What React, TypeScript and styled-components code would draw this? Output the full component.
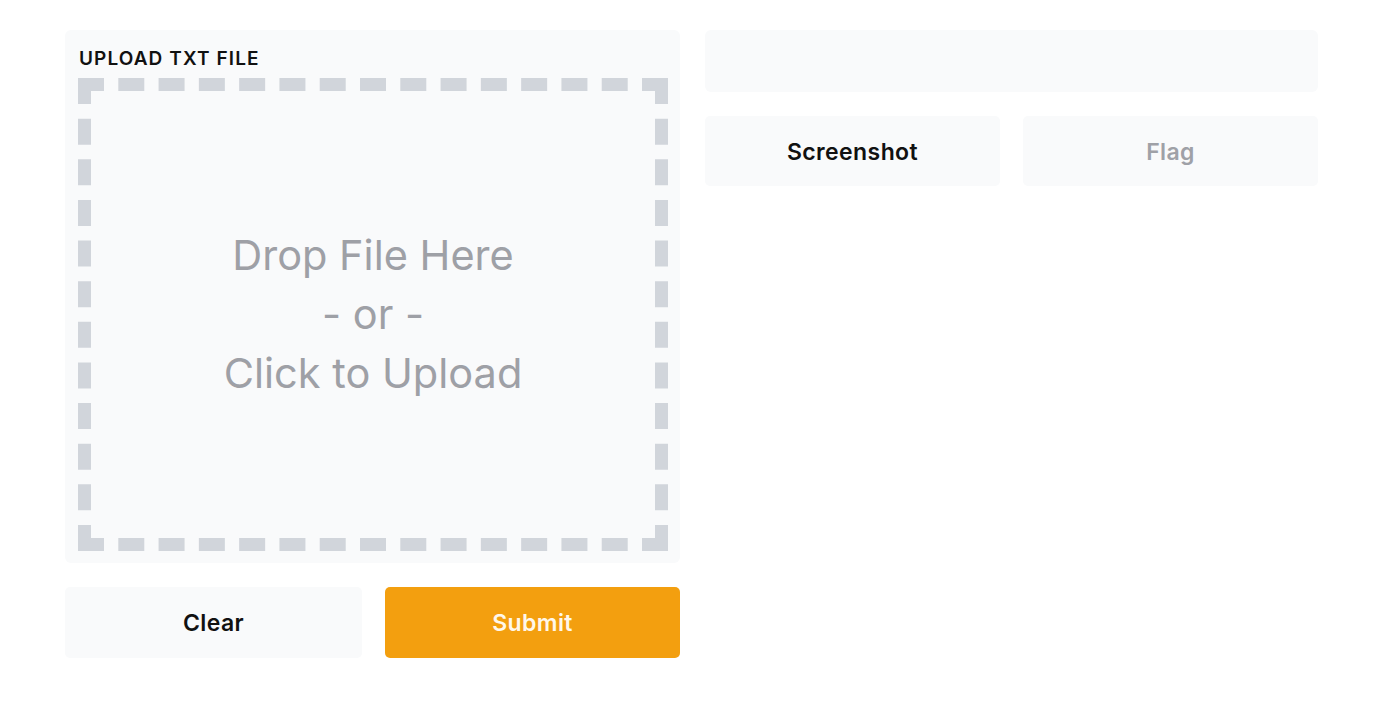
import React from "react";
import styled, { createGlobalStyle } from "styled-components";

const Global = createGlobalStyle`
  html, body { margin: 0; padding: 0; background: #ffffff; }
  body { font-family: "Inter", "Liberation Sans", sans-serif; }
  * { box-sizing: border-box; }
`;

const Page = styled.div`
  display: grid;
  grid-template-columns: 615px 613px;
  column-gap: 25px;
  padding: 30px 0 0 65px;
`;

const Column = styled.div`
  display: flex;
  flex-direction: column;
  gap: 24px;
`;

const Panel = styled.div`
  background: #f9fafb;
  border-radius: 6px;
  padding: 13px 12px 12px 13px;
  display: flex;
  flex-direction: column;
  height: 533px;
`;

const Label = styled.div`
  font-size: 19px;
  font-weight: 600;
  letter-spacing: 1.1px;
  color: #111;
  height: 35px;
  line-height: 31px;
  padding-left: 1px;
`;

const DropZone = styled.div`
  flex: 1;
  border: 13.5px dashed #d1d5db;
  display: flex;
  align-items: center;
  justify-content: center;
  text-align: center;
  color: #9ea0a6;
  font-size: 41.5px;
  line-height: 59px;
  font-weight: 400;
  cursor: pointer;
`;

const ButtonRow = styled.div<{ $cols: string }>`
  display: grid;
  grid-template-columns: ${(p) => p.$cols};
  column-gap: 23px;
`;

const Button = styled.button<{ $variant?: "primary" | "plain" | "muted"; $h: number }>`
  height: ${(p) => p.$h}px;
  padding-top: 2px;
  border: none;
  border-radius: 5px;
  font-family: "Inter", "Liberation Sans", sans-serif;
  font-size: 23px;
  font-weight: 600;
  letter-spacing: 0.4px;
  cursor: pointer;
  background: ${(p) => (p.$variant === "primary" ? "#f39f0f" : "#f9fafb")};
  color: ${(p) =>
    p.$variant === "primary" ? "#fff7ea" : p.$variant === "muted" ? "#9fa1a7" : "#111111"};
`;

const OutputBox = styled.div`
  height: 62px;
  background: #f9fafb;
  border-radius: 6px;
`;

export default function App() {
  return (
    <>
      <Global />
      <Page>
        <Column>
          <Panel>
            <Label>UPLOAD TXT FILE</Label>
            <DropZone>
              Drop File Here
              <br />- or -
              <br />
              Click to Upload
            </DropZone>
          </Panel>
          <ButtonRow $cols="297px 295px">
            <Button $h={71}>Clear</Button>
            <Button $h={71} $variant="primary">Submit</Button>
          </ButtonRow>
        </Column>
        <Column>
          <OutputBox />
          <ButtonRow $cols="295px 295px">
            <Button $h={70}>Screenshot</Button>
            <Button $h={70} $variant="muted">Flag</Button>
          </ButtonRow>
        </Column>
      </Page>
    </>
  );
}
